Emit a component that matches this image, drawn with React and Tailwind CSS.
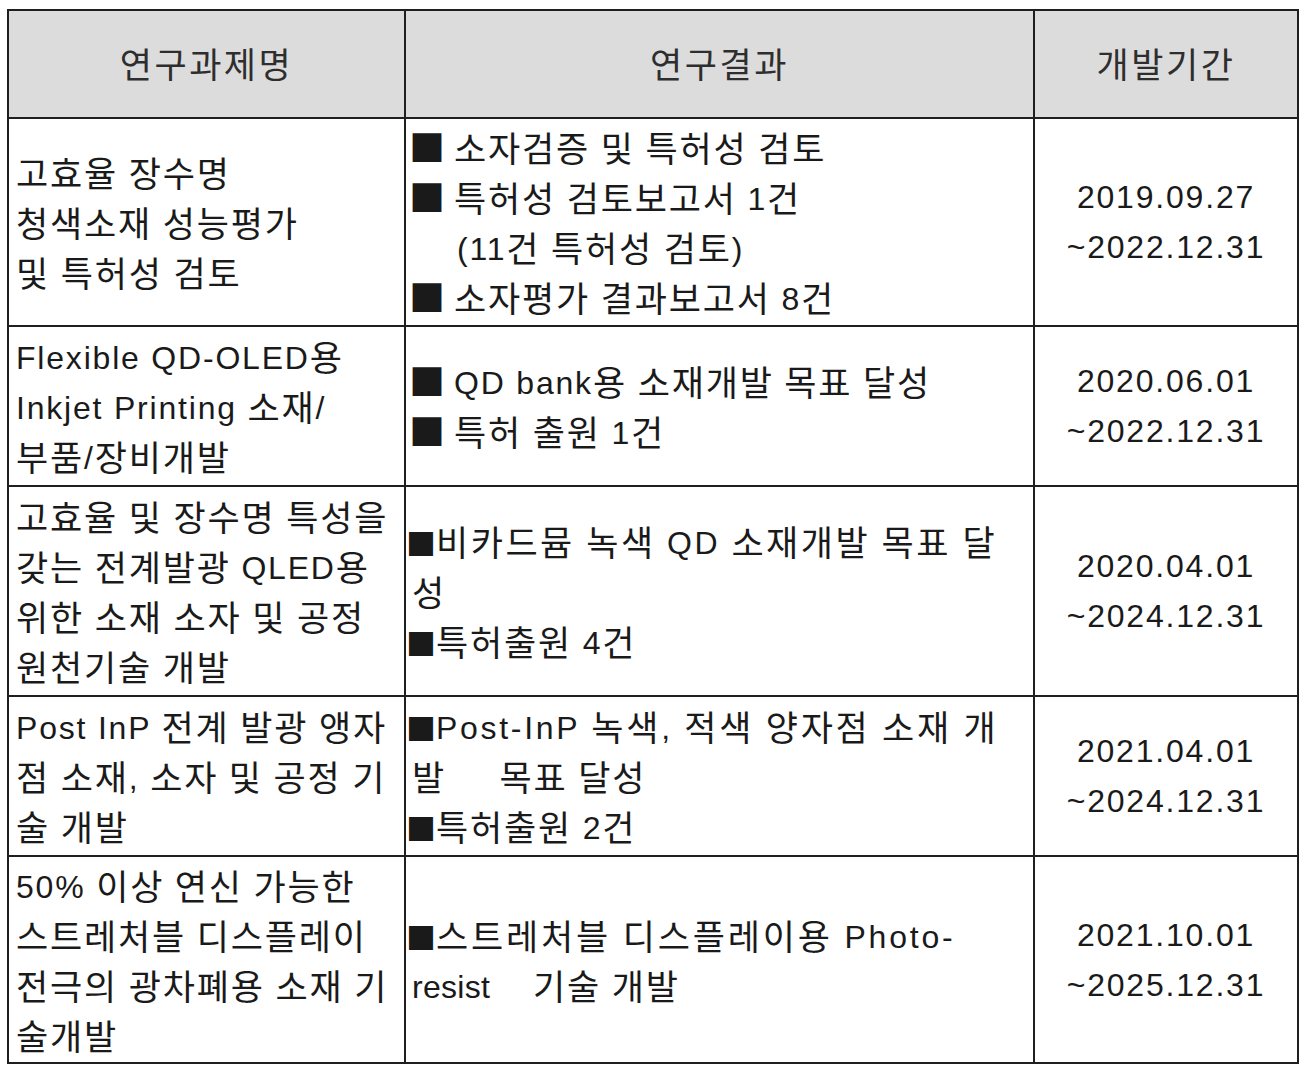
import React from "react";

const HANGUL = /([\uAC00-\uD7A3\u3131-\u318E]+)/;

function T({ text }) {
  const parts = text.split(HANGUL);
  return (
    <>
      {parts.map((p, i) =>
        p === "" ? null : HANGUL.test(p) ? (
          <span key={i} className="text-[35px] leading-none align-[-2px]">{p}</span>
        ) : (
          <span key={i}>{p}</span>
        )
      )}
    </>
  );
}

const B = ({ big }) => (
  <span
    className={
      big
        ? "[font-family:'Noto_Sans_CJK_KR',sans-serif] tracking-normal text-[36px] leading-none align-[-2px] ml-[3px] mr-[9px]"
        : "[font-family:'Noto_Sans_CJK_KR',sans-serif] tracking-normal text-[30px] leading-none align-[-1px]"
    }
  >
    ■
  </span>
);

function Line({ t, bullet, big, className = "" }) {
  return (
    <div className={`whitespace-pre h-[50px] ${className}`}>
      {bullet ? <B big={big} /> : null}
      <T text={t} />
    </div>
  );
}

const Head = ({ t }) => (
  <div className="bg-[#dcdcdc] flex items-center justify-center pt-[3px] text-[#2e2e2e] tracking-[2.5px]">
    <T text={t} />
  </div>
);

const Left = ({ children }) => (
  <div className="bg-white flex flex-col justify-center pl-[7px] pt-[4px]">{children}</div>
);
const Mid = ({ children }) => (
  <div className="bg-white flex flex-col justify-center pt-[4px]">{children}</div>
);
const Right = ({ a, b }) => (
  <div className="bg-white flex flex-col justify-center items-center text-center">
    <div>{a}</div>
    <div>{b}</div>
  </div>
);

export default function App() {
  return (
    <div className="bg-white w-[1302px] h-[1073px] pt-[9px] pl-[7px] [font-family:'Liberation_Sans','Noto_Sans_CJK_KR',sans-serif] text-[32px] leading-[50px] tracking-[1.8px] text-[#1a1a1a]">
      <div className="inline-grid grid-cols-[395px_627px_262px] grid-rows-[106px_206px_158px_208px_158px_205px] gap-[2px] bg-[#1f1f1f] p-[2px]">
        <Head t="연구과제명" />
        <Head t="연구결과" />
        <Head t="개발기간" />

        <Left>
          <Line t="고효율 장수명" />
          <Line t="청색소재 성능평가" />
          <Line t="및 특허성 검토" />
        </Left>
        <Mid>
          <Line bullet big t="소자검증 및 특허성 검토" />
          <Line bullet big t="특허성 검토보고서 1건" />
          <Line className="pl-[51px]" t="(11건 특허성 검토)" />
          <Line bullet big t="소자평가 결과보고서 8건" />
        </Mid>
        <Right a="2019.09.27" b="~2022.12.31" />

        <Left>
          <Line t="Flexible QD-OLED용" />
          <Line t="Inkjet Printing 소재/" />
          <Line t="부품/장비개발" />
        </Left>
        <Mid>
          <Line bullet big t="QD bank용 소재개발 목표 달성" />
          <Line bullet big t="특허 출원 1건" />
        </Mid>
        <Right a="2020.06.01" b="~2022.12.31" />

        <Left>
          <Line t="고효율 및 장수명 특성을" />
          <Line t="갖는 전계발광 QLED용" />
          <Line t="위한 소재 소자 및 공정" />
          <Line t="원천기술 개발" />
        </Left>
        <Mid>
          <Line className="tracking-[2.5px]" bullet t="비카드뮴 녹색 QD 소재개발 목표 달" />
          <Line className="pl-[6px]" t="성" />
          <Line bullet t="특허출원 4건" />
        </Mid>
        <Right a="2020.04.01" b="~2024.12.31" />

        <Left>
          <Line t="Post InP 전계 발광 앵자" />
          <Line t="점 소재, 소자 및 공정 기" />
          <Line t="술 개발" />
        </Left>
        <Mid>
          <Line className="tracking-[2.7px]" bullet t="Post-InP 녹색, 적색 양자점 소재 개" />
          <Line className="pl-[6px]" t="발     목표 달성" />
          <Line bullet t="특허출원 2건" />
        </Mid>
        <Right a="2021.04.01" b="~2024.12.31" />

        <Left>
          <Line t="50% 이상 연신 가능한" />
          <Line t="스트레처블 디스플레이" />
          <Line t="전극의 광차폐용 소재 기" />
          <Line t="술개발" />
        </Left>
        <Mid>
          <Line className="tracking-[2.8px]" bullet t="스트레처블 디스플레이용 Photo-" />
          <div className="whitespace-pre h-[50px] pl-[6px]">
            <span className="tracking-[0.3px]">resist</span>
            <T text="    기술 개발" />
          </div>
        </Mid>
        <Right a="2021.10.01" b="~2025.12.31" />
      </div>
    </div>
  );
}
